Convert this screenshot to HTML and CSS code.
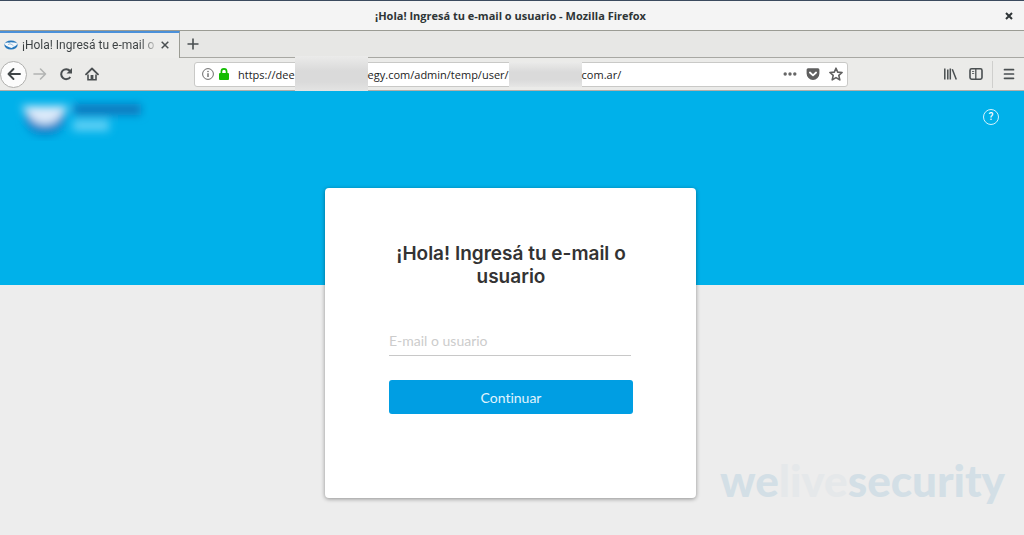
FILE: index.html
```html
<!DOCTYPE html>
<html lang="es">
<head>
<meta charset="utf-8">
<meta name="viewport" content="width=device-width, initial-scale=1">
<title>¡Hola! Ingresá tu e-mail o usuario</title>
<link rel="stylesheet" href="styles.css">
</head>
<body>
<div class="window">
  <header class="titlebar">
    <span class="window-title">¡Hola! Ingresá tu e-mail o usuario - Mozilla Firefox</span>
    <button class="window-close" type="button" aria-label="Cerrar ventana">
      <svg width="8" height="8" viewBox="0 0 8 8"><path d="M1 1l6 6M7 1L1 7" stroke="#2e3436" stroke-width="2" fill="none"/></svg>
    </button>
  </header>

  <div class="tabstrip">
    <div class="tab">
      <svg class="tab-icon" width="14" height="10" viewBox="0 0 14 10">
        <ellipse cx="7" cy="5" rx="6.600" ry="4.600" fill="#2678bd"/>
        <path d="M.6 3.600Q3 2.200 5 2.700L7 2.300l2 .3q2-.3 4.400 1L12.600 5Q11 6.500 9.300 7L7.600 8 6 7.600 4.200 6.800Q2.500 6.500 1 4.800Z" fill="#f4f8fb"/>
        <path d="M4 4.600l2-.8 2 .8 1.500 1.200" stroke="#6fa3d0" stroke-width=".7" fill="none"/>
      </svg>
      <span class="tab-label">¡Hola! Ingresá tu e-mail o</span>
      <button class="tab-close" type="button" aria-label="Cerrar pestaña">
        <svg width="8" height="8" viewBox="0 0 8 8"><path d="M.7.700l6.600 6.600M7.300.7L.7 7.300" stroke="#4a4f51" stroke-width="1.500" fill="none"/></svg>
      </button>
    </div>
    <button class="new-tab" type="button" aria-label="Nueva pestaña">
      <svg width="12" height="12" viewBox="0 0 12 12"><path d="M6 .5v11M.5 6h11" stroke="#4a4f51" stroke-width="1.600" fill="none"/></svg>
    </button>
  </div>

  <nav class="toolbar" aria-label="Navegación">
    <div class="nav-buttons">
      <button class="tool back" type="button" aria-label="Atrás">
        <svg width="14" height="14" viewBox="0 0 14 14"><path d="M13 7H1.500M6.500 2l-5 5 5 5" stroke="#3f4547" stroke-width="1.900" fill="none" stroke-linecap="round" stroke-linejoin="round"/></svg>
      </button>
      <button class="tool" type="button" aria-label="Adelante" disabled>
        <svg width="14" height="14" viewBox="0 0 14 14"><path d="M1 7h11.500M7.500 2l5 5-5 5" stroke="#b2b4b3" stroke-width="1.600" fill="none" stroke-linecap="round" stroke-linejoin="round"/></svg>
      </button>
      <button class="tool" type="button" aria-label="Recargar">
        <svg width="14" height="14" viewBox="0 0 14 14"><path d="M11.300 10A5 5 0 1 1 11 3.900" stroke="#4a4f51" stroke-width="2" fill="none"/><path d="M13 1v5.500H7.500Z" fill="#4a4f51"/></svg>
      </button>
      <button class="tool" type="button" aria-label="Inicio">
        <svg width="14" height="14" viewBox="0 0 14 14"><path d="M1 7.300L7 1.500l6 5.800" stroke="#4a4f51" stroke-width="1.800" fill="none" stroke-linecap="round" stroke-linejoin="round"/><path d="M3 7.500V12.700h8V7.500" stroke="#4a4f51" stroke-width="1.600" fill="none"/><path d="M5.600 8h2.800v5H5.600Z" fill="#4a4f51"/></svg>
      </button>
    </div>

    <div class="address">
      <svg width="12" height="12" viewBox="0 0 12 12"><circle cx="6" cy="6" r="5.400" fill="none" stroke="#6c6c6c"/><path d="M6 5.200V9" stroke="#6c6c6c" stroke-width="1.400"/><circle cx="6" cy="3.500" r=".8" fill="#6c6c6c"/></svg>
      <svg width="10" height="12" viewBox="0 0 10 12"><path d="M2.400 6V3.500a2.600 2.600 0 0 1 5.200 0V6" stroke="#12bc00" stroke-width="1.700" fill="none"/><rect x="0" y="5" width="10" height="7" rx="1" fill="#12bc00"/></svg>
      <div class="url" role="textbox" contenteditable="true" spellcheck="false" aria-label="Dirección"><span>https://dee</span><span class="redacted redacted-tall"></span><span>egy.com/admin/temp/user/</span><span class="redacted"></span><span>com.ar/</span></div>
      <div class="address-actions">
        <button class="plain" type="button" aria-label="Acciones de página">
          <svg width="14" height="14" viewBox="0 0 14 14"><g fill="#666"><circle cx="2.200" cy="7" r="1.700"/><circle cx="7" cy="7" r="1.700"/><circle cx="11.800" cy="7" r="1.700"/></g></svg>
        </button>
        <button class="plain" type="button" aria-label="Guardar en Pocket">
          <svg width="14" height="14" viewBox="0 0 14 14"><path d="M2 1.200h10A1.500 1.500 0 0 1 13.400 2.700V6.500A6.400 6.400 0 0 1 .6 6.500V2.700A1.500 1.500 0 0 1 2 1.200Z" fill="#5f5f5f"/><path d="M3.900 5.500L7 8.400l3.100-2.900" stroke="#fff" stroke-width="1.800" fill="none" stroke-linecap="round" stroke-linejoin="round"/></svg>
        </button>
        <button class="plain" type="button" aria-label="Añadir a marcadores">
          <svg width="14" height="14" viewBox="0 0 14 14"><path d="M7 1.200l1.700 3.900 4.400.4-3.300 2.900 1 4.500L7 10.600l-3.800 2.300 1-4.500L.9 5.500l4.400-.4Z" stroke="#5f5f5f" stroke-width="1.600" fill="none" stroke-linejoin="round"/></svg>
        </button>
      </div>
    </div>

    <div class="menu-buttons">
      <button class="plain" type="button" aria-label="Biblioteca">
        <svg width="14" height="14" viewBox="0 0 14 14"><path d="M1.800 1.500v11M4.800 2.500v10M7.300 1.500v11M9.300 2.200l4 10.200" stroke="#4a4f51" stroke-width="1.500" fill="none"/></svg>
      </button>
      <button class="plain" type="button" aria-label="Barra lateral">
        <svg width="14" height="14" viewBox="0 0 14 14"><rect x="1" y="1.800" width="12" height="10.400" rx="1.600" stroke="#4a4f51" stroke-width="1.600" fill="none"/><path d="M6.800 2v10" stroke="#4a4f51" stroke-width="1.300"/><path d="M3 4.500h2.200M3 6.500h2.200" stroke="#4a4f51" stroke-width=".8"/></svg>
      </button>
      <button class="plain menu" type="button" aria-label="Menú">
        <svg width="12" height="12" viewBox="0 0 12 12"><path d="M1.500 1.700h9M1.500 6h9M1.500 10.300h9" stroke="#4a4f51" stroke-width="1.700" stroke-linecap="round"/></svg>
      </button>
    </div>
  </nav>

  <main class="page">
    <div class="hero">
      <svg class="brand" width="150" height="50" viewBox="0 0 150 50" aria-hidden="true">
        <defs>
          <filter id="soft" x="-30%" y="-60%" width="160%" height="220%"><feGaussianBlur stdDeviation="4"/></filter>
        </defs>
        <g filter="url(#soft)">
          <path d="M25 18h40v12q-3 15-20 15T25 30Z" fill="#0787cc"/>
          <path d="M21 15h48l-11 13q-4 5-13 5t-13-5Z" fill="#dceafa"/>
          <rect x="74" y="13" width="67" height="11" fill="#0a78bd"/>
          <rect x="73" y="29" width="36" height="11" fill="#5fd0f5"/>
        </g>
      </svg>
      <a class="help" href="#ayuda" aria-label="Ayuda">?</a>
    </div>

    <form class="card">
      <h1>¡Hola! Ingresá tu e-mail o usuario</h1>
      <input class="field" type="text" name="user" placeholder="E-mail o usuario" aria-label="E-mail o usuario">
      <button class="submit" type="button">Continuar</button>
    </form>

    <div class="watermark">we<span>live</span>security</div>
  </main>
</div>
</body>
</html>
```
FILE: styles.css
```css
* {
  box-sizing: border-box;
}

body {
  margin: 0;
  background: #ededed;
  font-family: Roboto, "Noto Sans", sans-serif;
  font-size: 12px;
  color: #2e3436;
}

button {
  display: flex;
  align-items: center;
  justify-content: center;
  margin: 0;
  padding: 0;
  border: 0;
  background: none;
  font: inherit;
}

svg {
  display: block;
  flex: none;
}

.window {
  display: flex;
  flex-direction: column;
  min-height: 100vh;
}

.titlebar {
  display: grid;
  grid-template-columns: 1fr auto 1fr;
  align-items: center;
  height: 31px;
  padding: 0 11px 0 8px;
  border-top: 1px solid #3b4a5e;
  border-bottom: 1px solid #9b9c94;
  background: #f4f4f4;
}

.window-title {
  grid-column: 2;
  font-family: "Open Sans", "Noto Sans", sans-serif;
  font-size: 11px;
  font-weight: 700;
}

.window-close {
  justify-self: end;
}

.tabstrip {
  display: flex;
  height: 27px;
  background: #e7e7e5;
}

.tab {
  display: flex;
  align-items: center;
  gap: 4px;
  width: 180px;
  padding: 0 10px 2px 4px;
  border-top: 2px solid #4a90d9;
  border-right: 1px solid #9b9c94;
  background: #ededeb;
}

.tab-label {
  flex: 1;
  white-space: nowrap;
  color: transparent;
  background: linear-gradient(to right, #3b4042 88%, #d8d8d6);
  -webkit-background-clip: text;
  background-clip: text;
}

.new-tab {
  flex: 1;
  justify-content: flex-start;
  padding-left: 7px;
  border-bottom: 1px solid #a8a8a3;
}

.toolbar {
  display: flex;
  align-items: center;
  height: 33px;
  border-bottom: 1px solid #b3aea8;
  background: #ebebe9;
}

.nav-buttons {
  display: flex;
  align-items: center;
  width: 194px;
}

.tool {
  width: 26px;
  height: 26px;
}

.back {
  width: 27px;
  height: 27px;
  border: 1px solid #b0b0ae;
  border-radius: 50%;
  background: #fcfcfc;
}

.address {
  display: flex;
  flex: 1;
  align-items: center;
  gap: 5px;
  height: 25px;
  padding: 0 4px 0 7px;
  border: 1px solid #c9c9c7;
  border-radius: 3px;
  background: #fff;
}

.url {
  display: flex;
  flex: 1;
  align-items: center;
  height: 23px;
  margin-left: 4px;
  color: #1c1c1c;
  font-family: "Open Sans", "Noto Sans", sans-serif;
  font-size: 11px;
  white-space: nowrap;
  outline: none;
}

.redacted {
  width: 73px;
  height: 25px;
  background: linear-gradient(to bottom, #ebebea, #dadada 40%, #dadada 70%, #e6e6e5);
}

.redacted-tall {
  height: 37px;
}

.address-actions {
  display: flex;
  gap: 9px;
}

.menu-buttons {
  display: flex;
  align-items: center;
  justify-content: flex-end;
  gap: 12px;
  width: 176px;
  padding-right: 9px;
}

.menu {
  height: 27px;
  margin-left: -3px;
  padding-left: 10px;
  border-left: 1px solid #cfcfcd;
}

.page {
  display: grid;
  flex: 1;
  grid-template-rows: 194px 1fr;
  grid-template-columns: 1fr;
  background: #ededed;
}

.hero {
  display: flex;
  grid-area: 1 / 1;
  align-items: flex-start;
  justify-content: space-between;
  padding-right: 25px;
  background: #00b1ea;
}

.help {
  display: flex;
  align-items: center;
  justify-content: center;
  width: 16px;
  height: 16px;
  margin-top: 18px;
  border: 1px solid #d2f3fd;
  border-radius: 50%;
  color: #fff;
  font-size: 10px;
  font-weight: 500;
  line-height: 1;
  text-decoration: none;
}

.card {
  z-index: 1;
  grid-area: 1 / 1 / 3 / 2;
  align-self: start;
  justify-self: center;
  width: 371px;
  max-width: 100%;
  margin: 97px 3px 36px 0;
  padding: 54px 63px 84px 64px;
  border-radius: 4px;
  background: #fff;
  box-shadow: 0 1px 4px rgba(0, 0, 0, 0.4);
  font-family: Lato, sans-serif;
}

.card h1 {
  margin: 0 0 40px;
  color: #333;
  font-family: Inter, sans-serif;
  font-size: 19px;
  font-weight: 600;
  line-height: 23px;
  text-align: center;
}

.field {
  display: block;
  width: calc(100% - 2px);
  height: 28px;
  margin: 0 0 24px;
  padding: 0 0 2px;
  border: 0;
  border-bottom: 1px solid #c8c8c8;
  border-radius: 0;
  background: none;
  color: #333;
  font: 14px Lato, sans-serif;
  outline: none;
}

.field::placeholder {
  color: #ccc;
  opacity: 1;
}

.submit {
  width: 100%;
  height: 34px;
  border-radius: 3px;
  background: #009ee3;
  color: #e0f4fd;
  font-size: 14px;
  font-weight: 400;
  font-variant-ligatures: none;
}

.watermark {
  grid-area: 2 / 1;
  align-self: end;
  justify-self: end;
  padding: 0 19px 27px 0;
  color: #d3dfe6;
  font-family: Lato, sans-serif;
  font-size: 44px;
  font-weight: 900;
  line-height: 56px;
}

.watermark span {
  color: #e5e8ea;
}
```
